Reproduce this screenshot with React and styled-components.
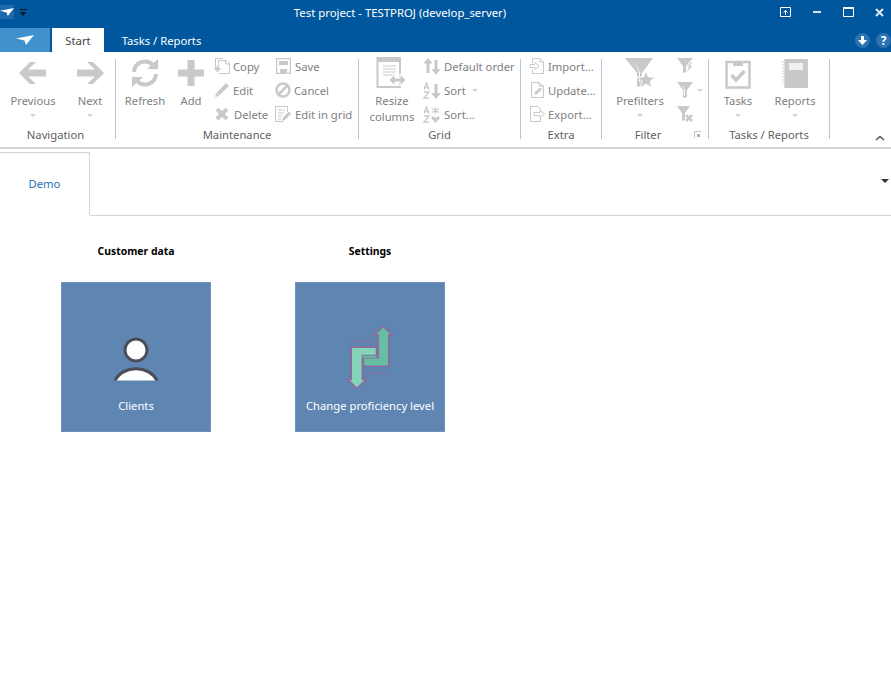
import React from 'react';
import styled, { createGlobalStyle } from 'styled-components';

const GlobalStyle = createGlobalStyle`
  html, body {
    margin: 0;
    padding: 0;
    height: 100%;
    background: #fff;
    font-family: 'Noto Sans', 'Open Sans', sans-serif;
    font-size: 11.250px;
    overflow: hidden;
  }
`;

const GREY = '#c9c9c9';

const Arrow = ({ flip }) => (
  <svg width='30' height='28' viewBox='0 0 30 28' style={flip ? { transform: 'scaleX(-1)' } : undefined}>
    <path d='M12 3 L1 14 L12 25 L18 25 L10 17.500 L28 17.500 L28 10.500 L10 10.500 L18 3 Z' fill={GREY} />
  </svg>
);
const RefreshIcon = () => (
  <svg width='32' height='30' viewBox='0 0 32 30'>
    <path d='M5 14 A11 11 0 0 1 24 7 M27 16 A11 11 0 0 1 8 23' fill='none' stroke={GREY} strokeWidth='4' />
    <path d='M18 11 L29 11 L29 1 Z M14 19 L3 19 L3 29 Z' fill={GREY} />
  </svg>
);
const PlusIcon = () => (
  <svg width='28' height='28' viewBox='0 0 28 28'>
    <path d='M10.500 1 H17.500 V10.500 H27 V17.500 H17.500 V27 H10.500 V17.500 H1 V10.500 H10.500 Z' fill={GREY} />
  </svg>
);
const CopyIcon = () => (
  <svg width='16' height='16' viewBox='0 0 16 16' fill='none' stroke={GREY}>
    <path d='M1.500 10 V.5 H9 M4.500 15.500 H15.500 V5.500 L12 2.500 H4.500 V9' />
    <path d='M11.500 2.500 V6 H15.500' />
    <path d='M3.500 8 V14 M.5 11 H6.500' strokeWidth='2' />
  </svg>
);
const PencilIcon = () => (
  <svg width='16' height='16' viewBox='0 0 16 16'>
    <path d='M1 15 L2 11.500 L12 1 L15 4 L4.500 14 Z' fill={GREY} />
    <path d='M3 11.500 L4.500 13' stroke='#fff' strokeWidth='.8' />
  </svg>
);
const CrossIcon = () => (
  <svg width='14' height='14' viewBox='0 0 14 14'>
    <path d='M2 2 L12 12 M12 2 L2 12' stroke={GREY} strokeWidth='4' />
  </svg>
);
const SaveIcon = () => (
  <svg width='15' height='16' viewBox='0 0 15 16'>
    <path d='M.5 .5 H14.500 V15.500 H.5 Z' fill='none' stroke={GREY} strokeWidth='1.500' />
    <path d='M3 3 H12 V7 H3 Z M4 11 H11 V15 H4 Z' fill={GREY} />
  </svg>
);
const BanIcon = () => (
  <svg width='16' height='16' viewBox='0 0 16 16' fill='none' stroke={GREY} strokeWidth='2.500'>
    <circle cx='8' cy='8' r='6.500' />
    <path d='M3.500 12.500 L12.500 3.500' />
  </svg>
);
const GridEditIcon = () => (
  <svg width='16' height='16' viewBox='0 0 16 16' fill='none' stroke={GREY}>
    <path d='M12.500 6 V.5 H.5 V15.500 H8' />
    <path d='M3 4 H10 M3 7 H9 M3 10 H7 M3 13 H6' />
    <path d='M7 15 L8 11.500 L14 5.500 L16 8 L10 14 Z' fill={GREY} stroke='none' />
  </svg>
);
const ResizeIcon = () => (
  <svg width='32' height='32' viewBox='0 0 32 32'>
    <path d='M1.500 1 H24 V30 H1.500 Z' fill='#fff' stroke={GREY} strokeWidth='2' />
    <path d='M1 1 H25 V5 H1 Z' fill={GREY} />
    <path d='M7 9 H20 M7 12 H20 M7 15 H20 M7 18 H20' stroke={GREY} />
    <path d='M13 23 L19 17 V21 H24 V17 L30 23 L24 29 V25 H19 V29 Z' fill={GREY} stroke='#fff' />
  </svg>
);
const UpDownIcon = () => (
  <svg width='18' height='17' viewBox='0 0 18 17'>
    <path d='M5 0 L9.500 5.500 H6.500 V15 H3.500 V5.500 H.5 Z M13 17 L8.500 11 H11.500 V2 H14.500 V11 H17.500 Z' fill={GREY} />
  </svg>
);
const AzSortIcon = () => (
  <svg width='18' height='17' viewBox='0 0 18 17'>
    <path d='M1 7.500 L3.500 1 L6 7.500 M2 5.500 H5 M1 10 H6 L1 16 H6' fill='none' stroke={GREY} strokeWidth='1.300' />
    <path d='M13 17 L8 11 H11.500 V2 H14.500 V11 H18 Z' fill={GREY} />
  </svg>
);
const AzStarIcon = () => (
  <svg width='18' height='17' viewBox='0 0 18 17'>
    <path d='M1 7.500 L3.500 1 L6 7.500 M2 5.500 H5 M1 10 H6 L1 16 H6' fill='none' stroke={GREY} strokeWidth='1.300' />
    <path d='M12.500 1 V8 M9 2.500 L16 6.500 M16 2.500 L9 6.500' stroke={GREY} strokeWidth='1.200' />
    <path d='M12.500 17 L8 12 L10 10 L12.500 12 L15 10 L17 12 Z' fill={GREY} />
  </svg>
);
const ImportIcon = () => (
  <svg width='17' height='16' viewBox='0 0 17 16' fill='none' stroke={GREY}>
    <path d='M3.500 5 V.5 H11 L14.500 4 V15.500 H3.500 V11' />
    <path d='M11 .5 V4 H14.500' />
    <path d='M1 6.500 H6 V4.500 L10 8 L6 11.500 V9.500 H1 Z' />
  </svg>
);
const UpdateIcon = () => (
  <svg width='17' height='16' viewBox='0 0 17 16' fill='none' stroke={GREY}>
    <path d='M2.500 15.500 V.5 H10 L14.500 4 V15.500 Z' />
    <path d='M10 .5 V4 H14.500' />
    <path d='M5 13 L6 10 L11 5.500 L13 7.500 L8 12 Z' fill={GREY} stroke='none' />
  </svg>
);
const ExportIcon = () => (
  <svg width='17' height='16' viewBox='0 0 17 16' fill='none' stroke={GREY}>
    <path d='M11.500 5 V3.500 L9 .5 H1.500 V15.500 H11.500 V11' />
    <path d='M5 6.500 H11 V4.500 L15.500 8 L11 11.500 V9.500 H5 Z' />
  </svg>
);
const StarFunnelIcon = () => (
  <svg width='32' height='32' viewBox='0 0 32 32'>
    <path d='M1 1 H29 L18 16 V28 L13 30 V16 Z' fill={GREY} />
    <path d='M11 4 L16 16 V24 L15 25 V16 Z' fill='#fff' />
    <path d='M22 14 L24.500 20 L31 20 L26 24.500 L28 31 L22 27 L16 31 L18 24.500 L13 20 L19.500 20 Z' fill={GREY} stroke='#fff' />
  </svg>
);
const BoltFunnelIcon = () => (
  <svg width='18' height='18' viewBox='0 0 18 18'>
    <path d='M1 1 H17 L10 9 V15 L7 16 V9 Z' fill={GREY} />
    <path d='M15 5 L10 10 H13 L9 17 L17 9 H14 L17 5 Z' fill={GREY} stroke='#fff' strokeWidth='.7' />
  </svg>
);
const FunnelIcon = () => (
  <svg width='18' height='18' viewBox='0 0 18 18'>
    <path d='M1 1 H17 L11 9 V16 L7 17 V9 Z' fill={GREY} />
    <path d='M6 3 L9 9 V15 L8 15.500 V9 Z' fill='#fff' />
  </svg>
);
const ClearFunnelIcon = () => (
  <svg width='18' height='18' viewBox='0 0 18 18'>
    <path d='M1 1 H14 L9 8 V15 L6 16 V8 Z' fill={GREY} />
    <path d='M10 10 L16 16 M16 10 L10 16' stroke={GREY} strokeWidth='2.500' />
  </svg>
);
const TasksIcon = () => (
  <svg width='26' height='31' viewBox='0 0 26 31'>
    <path d='M1.500 4 H24.500 V29.500 H1.500 Z' fill='#fff' stroke={GREY} strokeWidth='2.500' />
    <path d='M8 4 H10.500 A3 3 0 0 1 15.500 4 H18 V8 H8 Z' fill={GREY} />
    <path d='M6.500 17 L11 22 L19.500 13' fill='none' stroke={GREY} strokeWidth='3.500' />
  </svg>
);
const NotebookIcon = () => (
  <svg width='28' height='31' viewBox='0 0 28 31'>
    <path d='M3 1 H27 V30 H3 Z' fill={GREY} />
    <path d='M8 5 H22 V12 H8 Z' fill='#f1f1f1' />
    <path d='M1 4 H4 M1 7 H4 M1 10 H4 M1 13 H4 M1 16 H4 M1 19 H4 M1 22 H4 M1 25 H4' stroke={GREY} />
    <path d='M3 1 V30' stroke='#fff' strokeWidth='.7' />
  </svg>
);
const PlaneIcon = ({ w = 18, h = 10 }) => (
  <svg width={w} height={h} viewBox='0 0 18 10'>
    <path d='M0 3.500 L18 0 L10 10 L8.500 5.500 Z' fill='#fff' />
  </svg>
);
const PersonIcon = () => (
  <svg width='46' height='46' viewBox='0 0 46 46'>
    <circle cx='23' cy='13' r='11' fill='#fff' stroke='#4b4d5b' strokeWidth='3' />
    <path d='M2 43.500 A23 20 0 0 1 44 43.500 Z' fill='#fff' />
    <path d='M2 43.500 A23 20 0 0 1 44 43.500' fill='none' stroke='#4b4d5b' strokeWidth='3' />
  </svg>
);
const SwapIcon = () => (
  <svg width='50' height='66' viewBox='180 130 150 200'>
    <path d='M197 182 H268 M245 280 H315' stroke='#8f6a9c' strokeWidth='6' strokeDasharray='7 9' fill='none' />
    <path d='M295 137 L323 163 L312 163 L312 258 L235 258 L235 232 L280 232 L280 163 L267 163 Z' fill='#65bfa3' stroke='#8f6a9c' strokeWidth='5' />
    <path d='M215 325 L187 298 L198 298 L198 200 L275 200 L275 226 L232 226 L232 298 L245 298 Z' fill='#85d3b9' stroke='#8f6a9c' strokeWidth='5' />
    <path d='M232 226 H275 V232 H232 Z' fill='#65bfa3' />
  </svg>
);

const Window = styled.div`
  width: 891px;
  height: 689px;
  display: flex;
  flex-direction: column;
  background: #fff;
`;
const TitleBar = styled.header`
  height: 28px;
  display: grid;
  grid-template-columns: 31px 1fr 122px;
  align-items: center;
  background: #01579e;
  color: #fff;
`;
const QuickAccess = styled.div`
  display: flex;
  align-items: center;
  gap: 6px;
  padding-bottom: 4px;
`;
const QuickLogo = styled.div`
  width: 14px;
  height: 14px;
  background: #1d6bad;
  display: flex;
  align-items: center;
`;
const QuickMenu = styled.div`
  width: 7px;
  height: 6px;
  border-top: 1px solid #111;
  position: relative;
  &::after {
    content: '';
    position: absolute;
    top: 2px;
    left: 0;
    border: 3.5px solid transparent;
    border-top: 4px solid #111;
    border-bottom: 0;
  }
`;
const Title = styled.div`
  text-align: center;
  font-size: 11.350px;
  padding-bottom: 4px;
`;
const WindowButtons = styled.div`
  display: flex;
  align-items: center;
  gap: 15.500px;
  padding: 0 0 4px 8px;
`;
const WindowButton = styled.div`
  width: 16px;
  height: 16px;
  flex: none;
  display: flex;
  align-items: center;
  justify-content: center;
`;
const TabRow = styled.nav`
  height: 24px;
  display: flex;
  align-items: stretch;
  background: #01579e;
`;
const AppTab = styled.div`
  width: 50px;
  display: flex;
  align-items: center;
  justify-content: center;
  background: #4191cc;
`;
const RibbonTab = styled.div`
  margin-left: ${(p) => p.$ml || 0}px;
  width: ${(p) => p.$w}px;
  display: flex;
  align-items: center;
  justify-content: center;
  background: ${(p) => (p.$active ? '#fff' : 'transparent')};
  color: ${(p) => (p.$active ? '#444' : '#fff')};
`;
const HelpIcons = styled.div`
  margin-left: auto;
  display: flex;
  align-items: center;
  gap: 6px;
`;
const RoundButton = styled.div`
  width: 15px;
  height: 15px;
  border-radius: 50%;
  background: #2d73b2;
  color: #fff;
  font-size: 12px;
  font-weight: 700;
  line-height: 15px;
  text-align: center;
  display: flex;
  align-items: center;
  justify-content: center;
`;
const Ribbon = styled.section`
  height: 97px;
  padding-top: 3px;
  box-sizing: border-box;
  display: flex;
  align-items: flex-start;
  border-bottom: 2px solid #d4d4d4;
  background: #fff;
`;
const Group = styled.div`
  position: relative;
  width: ${(p) => p.$w}px;
  height: 88px;
  display: flex;
  flex-direction: column;
  flex: none;
`;
const GroupBody = styled.div`
  height: 72px;
  display: flex;
  align-items: flex-start;
  padding-left: ${(p) => p.$pad || 0}px;
  gap: ${(p) => p.$gap || 0}px;
`;
const GroupLabel = styled.div`
  height: 16px;
  line-height: 16px;
  text-align: center;
  padding-right: ${(p) => p.$pr || 0}px;
  color: #5f5f5f;
`;
const Separator = styled.div`
  width: 1px;
  height: 80px;
  margin-top: 4px;
  flex: none;
  background: #b4c5dc;
`;
const LargeButton = styled.div`
  width: ${(p) => p.$w}px;
  margin: 0 ${(p) => p.$mr || 0}px 0 ${(p) => p.$ml || 0}px;
  flex: none;
  padding-top: 2px;
  display: flex;
  flex-direction: column;
  align-items: center;
  color: #808080;
  line-height: 16px;
  text-align: center;
`;
const LargeIcon = styled.div`
  height: 32px;
  margin-bottom: 4px;
  display: flex;
  align-items: center;
  justify-content: center;
`;
const Caret = styled.span`
  display: inline-block;
  width: 0;
  height: 0;
  border: 3px solid transparent;
  border-top: 3px solid #d2d2d2;
  border-bottom: 0;
`;
const LargeCaret = styled(Caret)`
  margin-top: 5px;
`;
const SmallColumn = styled.div`
  width: ${(p) => p.$w || 'auto'};
  margin-top: -1px;
  flex: none;
  display: flex;
  flex-direction: column;
`;
const SmallButton = styled.div`
  height: 24px;
  display: flex;
  align-items: center;
  gap: ${(p) => p.$gap ?? 2}px;
  color: #808080;
  white-space: nowrap;
`;
const SmallIcon = styled.span`
  width: 18px;
  height: 18px;
  flex: none;
  display: flex;
  align-items: center;
  justify-content: center;
`;
const InlineCaret = styled(Caret)`
  margin-left: 3px;
`;
const Launcher = styled.div`
  position: absolute;
  right: 7px;
  bottom: 5px;
  width: 6px;
  height: 6px;
  border: 1px solid #c4c4c4;
  border-width: 1px 0 0 1px;
  &::after {
    content: '';
    display: block;
    margin: 2px 0 0 2px;
    width: 3px;
    height: 3px;
    background: #b0b0b0;
  }
`;
const Collapse = styled.div`
  margin-left: auto;
  align-self: flex-end;
  padding: 0 6px 6px 0;
  display: flex;
`;
const TabStrip = styled.div`
  margin-top: 3px;
  height: 64px;
  display: flex;
`;
const PageTab = styled.div`
  width: 90px;
  height: 63px;
  padding-bottom: 1px;
  box-sizing: border-box;
  border-top: 1px solid #d4d4d4;
  border-right: 1px solid #d4d4d4;
  display: flex;
  align-items: center;
  justify-content: center;
  color: #1f72b8;
  background: #fff;
`;
const StripRest = styled.div`
  flex: 1;
  border-bottom: 1px solid #d4d4d4;
  display: flex;
  justify-content: flex-end;
  padding: 27px 2px 0 0;
`;
const StripCaret = styled.span`
  width: 0;
  height: 0;
  border: 4px solid transparent;
  border-top: 4px solid #333;
  border-bottom: 0;
`;
const Content = styled.main`
  display: flex;
  gap: 84px;
  padding: 27px 0 0 61px;
`;
const Section = styled.section`
  width: 150px;
`;
const SectionTitle = styled.h3`
  margin: 0 0 23px;
  height: 16px;
  line-height: 16px;
  text-align: center;
  color: #000;
  font-size: 10.400px;
  font-weight: 700;
`;
const Tile = styled.div`
  width: 150px;
  height: 150px;
  box-sizing: border-box;
  border: 1px solid #6e92bb;
  background: #5f86b3;
  display: flex;
  flex-direction: column;
  align-items: center;
  color: #fff;
`;
const TileIcon = styled.div`
  height: 115px;
  padding-top: ${(p) => p.$top}px;
  box-sizing: border-box;
  display: flex;
  justify-content: center;
`;
const TileLabel = styled.div`
  line-height: 16px;
  white-space: nowrap;
`;

const small = (icon, text, caret, gap) => (
  <SmallButton $gap={gap} key={text + gap}>
    <SmallIcon>{icon}</SmallIcon>
    {text}
    {caret && <InlineCaret />}
  </SmallButton>
);

export default function App() {
  return (
    <Window>
      <GlobalStyle />
      <TitleBar>
        <QuickAccess>
          <QuickLogo><PlaneIcon w={14} h={8} /></QuickLogo>
          <QuickMenu />
        </QuickAccess>
        <Title>Test project - TESTPROJ (develop_server)</Title>
        <WindowButtons>
          <WindowButton>
            <svg width='11' height='10' viewBox='0 0 11 10' fill='none' stroke='#fff'>
              <path d='M.5 .5 H10.500 V9.500 H.5 Z M5.500 8 V3.500 M3.500 5.500 L5.500 3.500 L7.500 5.500' />
            </svg>
          </WindowButton>
          <WindowButton>
            <svg width='8' height='3' viewBox='0 0 8 3'><path d='M0 0 H8 V2 H0 Z' fill='#d8e4ef' /></svg>
          </WindowButton>
          <WindowButton>
            <svg width='11' height='10' viewBox='0 0 11 10' fill='none' stroke='#fff'>
              <path d='M.5 1 H10.500 V9.500 H.5 Z' />
              <path d='M0 1 H11' strokeWidth='2' />
            </svg>
          </WindowButton>
          <WindowButton>
            <svg width='9' height='9' viewBox='0 0 9 9'>
              <path d='M1 1 L8 8 M8 1 L1 8' stroke='#dfe9f2' strokeWidth='2' />
            </svg>
          </WindowButton>
        </WindowButtons>
      </TitleBar>
      <TabRow>
        <AppTab><PlaneIcon /></AppTab>
        <RibbonTab $active $ml={2} $w={52}>Start</RibbonTab>
        <RibbonTab $ml={10} $w={95}>Tasks / Reports</RibbonTab>
        <HelpIcons>
          <RoundButton>
            <svg width='9' height='9' viewBox='0 0 9 9'>
              <path d='M3 0 H6 V4 H9 L4.500 9 L0 4 H3 Z' fill='#fff' />
            </svg>
          </RoundButton>
          <RoundButton>?</RoundButton>
        </HelpIcons>
      </TabRow>
      <Ribbon>
        <Group $w={115}>
          <GroupBody $pad={8} $gap={12}>
            <LargeButton $w={50}>
              <LargeIcon><Arrow /></LargeIcon>
              Previous
              <LargeCaret />
            </LargeButton>
            <LargeButton $w={40}>
              <LargeIcon><Arrow flip /></LargeIcon>
              Next
              <LargeCaret />
            </LargeButton>
          </GroupBody>
          <GroupLabel $pr={4}>Navigation</GroupLabel>
        </Group>
        <Separator />
        <Group $w={242}>
          <GroupBody $pad={8}>
            <LargeButton $w={42}>
              <LargeIcon><RefreshIcon /></LargeIcon>
              Refresh
            </LargeButton>
            <LargeButton $ml={5} $mr={2} $w={40}>
              <LargeIcon><PlusIcon /></LargeIcon>
              Add
            </LargeButton>
            <SmallColumn $w='61px'>
              {small(<CopyIcon />, 'Copy')}
              {small(<PencilIcon />, 'Edit')}
              {small(<CrossIcon />, 'Delete', false, 3)}
            </SmallColumn>
            <SmallColumn>
              {small(<SaveIcon />, 'Save', false, 3)}
              {small(<BanIcon />, 'Cancel')}
              {small(<GridEditIcon />, 'Edit in grid', false, 3)}
            </SmallColumn>
          </GroupBody>
          <GroupLabel>Maintenance</GroupLabel>
        </Group>
        <Separator />
        <Group $w={161}>
          <GroupBody $pad={2}>
            <LargeButton $w={62}>
              <LargeIcon><ResizeIcon /></LargeIcon>
              Resize<br />columns
            </LargeButton>
            <SmallColumn>
              {small(<UpDownIcon />, 'Default order', false, 3)}
              {small(<AzSortIcon />, 'Sort', true, 3)}
              {small(<AzStarIcon />, 'Sort...', false, 3)}
            </SmallColumn>
          </GroupBody>
          <GroupLabel>Grid</GroupLabel>
        </Group>
        <Separator />
        <Group $w={80}>
          <GroupBody $pad={7}>
            <SmallColumn>
              {small(<ImportIcon />, 'Import...')}
              {small(<UpdateIcon />, 'Update...')}
              {small(<ExportIcon />, 'Export...')}
            </SmallColumn>
          </GroupBody>
          <GroupLabel>Extra</GroupLabel>
        </Group>
        <Separator />
        <Group $w={106}>
          <GroupBody $pad={13} $gap={11}>
            <LargeButton $w={50}>
              <LargeIcon><StarFunnelIcon /></LargeIcon>
              Prefilters
              <LargeCaret />
            </LargeButton>
            <SmallColumn>
              {small(<BoltFunnelIcon />, '')}
              {small(<FunnelIcon />, '', true, 0)}
              {small(<ClearFunnelIcon />, '', false, 1)}
            </SmallColumn>
          </GroupBody>
          <GroupLabel $pr={14}>Filter</GroupLabel>
          <Launcher />
        </Group>
        <Separator />
        <Group $w={120}>
          <GroupBody $pad={9} $gap={12}>
            <LargeButton $w={40}>
              <LargeIcon><TasksIcon /></LargeIcon>
              Tasks
              <LargeCaret />
            </LargeButton>
            <LargeButton $w={50}>
              <LargeIcon><NotebookIcon /></LargeIcon>
              Reports
              <LargeCaret />
            </LargeButton>
          </GroupBody>
          <GroupLabel>Tasks / Reports</GroupLabel>
        </Group>
        <Separator />
        <Collapse>
          <svg width='10' height='6' viewBox='0 0 10 6'>
            <path d='M1 5 L5 1.500 L9 5' fill='none' stroke='#555' strokeWidth='1.500' />
          </svg>
        </Collapse>
      </Ribbon>
      <TabStrip>
        <PageTab>Demo</PageTab>
        <StripRest><StripCaret /></StripRest>
      </TabStrip>
      <Content>
        <Section>
          <SectionTitle>Customer data</SectionTitle>
          <Tile>
            <TileIcon $top={54}><PersonIcon /></TileIcon>
            <TileLabel>Clients</TileLabel>
          </Tile>
        </Section>
        <Section>
          <SectionTitle>Settings</SectionTitle>
          <Tile>
            <TileIcon $top={41}><SwapIcon /></TileIcon>
            <TileLabel>Change proficiency level</TileLabel>
          </Tile>
        </Section>
      </Content>
    </Window>
  );
}
